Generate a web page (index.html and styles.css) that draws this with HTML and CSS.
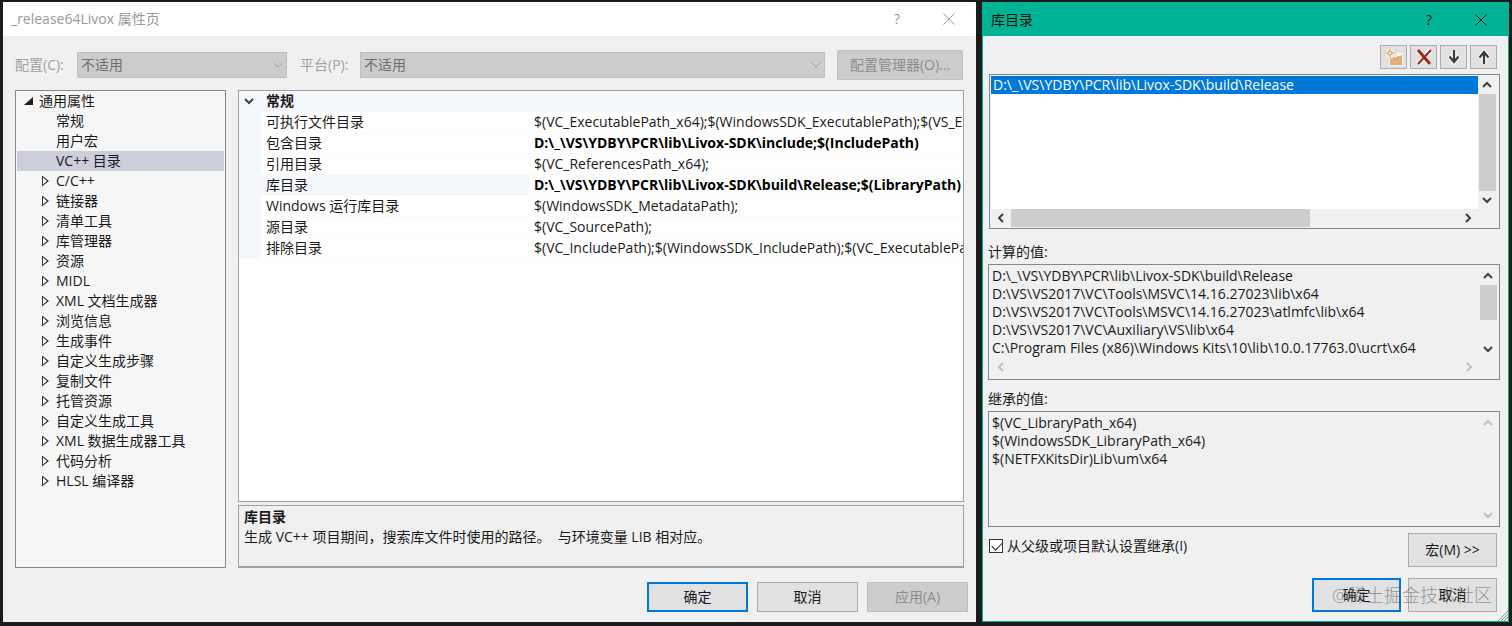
FILE: index.html
```html
<!DOCTYPE html>
<html lang="zh-CN">
<head>
    <meta charset="UTF-8">
    <meta name="viewport" content="width=device-width, initial-scale=1.0">
    <title>_release64Livox 属性页</title>
    <link rel="stylesheet" href="styles.css">
</head>
<body>

    <!-- Shared icons -->
    <svg class="sprite" aria-hidden="true">
        <symbol id="chevron-up" viewBox="0 0 10 10"><path d="M1 7l4-4 4 4" /></symbol>
        <symbol id="chevron-down" viewBox="0 0 10 10"><path d="M1 3l4 4 4-4" /></symbol>
        <symbol id="chevron-left" viewBox="0 0 10 10"><path d="M7 1L3 5l4 4" /></symbol>
        <symbol id="chevron-right" viewBox="0 0 10 10"><path d="M3 1l4 4-4 4" /></symbol>
        <symbol id="close" viewBox="0 0 12 12"><path d="M.5.5l11 11M11.5.5l-11 11" /></symbol>
    </svg>

    <!-- Property pages window -->
    <section class="window properties">
        <header class="titlebar">
            <h1>_release64Livox 属性页</h1>
            <button class="caption" aria-label="帮助">?</button>
            <button class="caption" aria-label="关闭"><svg class="icon-close"><use href="#close" /></svg></button>
        </header>

        <div class="config-row">
            <label for="config">配置(C):</label>
            <div class="dropdown dropdown-config">
                <select id="config" disabled><option>不适用</option></select>
                <svg class="chevron"><use href="#chevron-down" /></svg>
            </div>
            <label for="platform" class="platform-label">平台(P):</label>
            <div class="dropdown dropdown-platform">
                <select id="platform" disabled><option>不适用</option></select>
                <svg class="chevron"><use href="#chevron-down" /></svg>
            </div>
            <button class="btn config-manager" disabled>配置管理器(O)...</button>
        </div>

        <div class="panels">
            <nav class="tree">
                <ul>
                    <li class="root">
                        <svg class="arrow-open" viewBox="0 0 9 9"><path d="M9 0v8H0z" /></svg>通用属性
                    </li>
                    <li>常规</li>
                    <li>用户宏</li>
                    <li class="selected">VC++ 目录</li>
                    <li class="closed">C/C++</li>
                    <li class="closed">链接器</li>
                    <li class="closed">清单工具</li>
                    <li class="closed">库管理器</li>
                    <li class="closed">资源</li>
                    <li class="closed">MIDL</li>
                    <li class="closed">XML 文档生成器</li>
                    <li class="closed">浏览信息</li>
                    <li class="closed">生成事件</li>
                    <li class="closed">自定义生成步骤</li>
                    <li class="closed">复制文件</li>
                    <li class="closed">托管资源</li>
                    <li class="closed">自定义生成工具</li>
                    <li class="closed">XML 数据生成器工具</li>
                    <li class="closed">代码分析</li>
                    <li class="closed">HLSL 编译器</li>
                </ul>
            </nav>

            <div class="details">
                <div class="grid">
                    <table>
                        <colgroup>
                            <col class="col-gutter">
                            <col class="col-name">
                            <col>
                        </colgroup>
                        <tr class="group">
                            <td class="gutter"><svg class="chevron"><use href="#chevron-down" /></svg></td>
                            <th colspan="2">常规</th>
                        </tr>
                        <tr>
                            <td class="gutter"></td>
                            <td>可执行文件目录</td>
                            <td>$(VC_ExecutablePath_x64);$(WindowsSDK_ExecutablePath);$(VS_ExecutablePath)</td>
                        </tr>
                        <tr>
                            <td class="gutter"></td>
                            <td>包含目录</td>
                            <td class="changed">D:\_\VS\YDBY\PCR\lib\Livox-SDK\include;$(IncludePath)</td>
                        </tr>
                        <tr>
                            <td class="gutter"></td>
                            <td>引用目录</td>
                            <td>$(VC_ReferencesPath_x64);</td>
                        </tr>
                        <tr>
                            <td class="gutter"></td>
                            <td class="current">库目录</td>
                            <td class="changed">D:\_\VS\YDBY\PCR\lib\Livox-SDK\build\Release;$(LibraryPath)</td>
                        </tr>
                        <tr>
                            <td class="gutter"></td>
                            <td>Windows 运行库目录</td>
                            <td>$(WindowsSDK_MetadataPath);</td>
                        </tr>
                        <tr>
                            <td class="gutter"></td>
                            <td>源目录</td>
                            <td>$(VC_SourcePath);</td>
                        </tr>
                        <tr>
                            <td class="gutter"></td>
                            <td>排除目录</td>
                            <td>$(VC_IncludePath);$(WindowsSDK_IncludePath);$(VC_ExecutablePath_x64)</td>
                        </tr>
                    </table>
                </div>
                <div class="description">
                    <h2>库目录</h2>
                    <p>生成 VC++ 项目期间，搜索库文件时使用的路径。&nbsp; 与环境变量 LIB 相对应。</p>
                </div>
            </div>
        </div>

        <footer class="actions">
            <button class="btn primary">确定</button>
            <button class="btn">取消</button>
            <button class="btn" disabled>应用(A)</button>
        </footer>
    </section>

    <!-- Library directories window -->
    <section class="window directories">
        <header class="titlebar">
            <h1>库目录</h1>
            <button class="caption" aria-label="帮助">?</button>
            <button class="caption" aria-label="关闭"><svg class="icon-close"><use href="#close" /></svg></button>
        </header>

        <div class="toolbar">
            <button class="tool" aria-label="新行">
                <svg viewBox="0 0 20 20">
                    <path d="M5 9h7l1-3h6v13H5z" fill="#f6f3ee" />
                    <path d="M6 10h7l1-2h4v10H6z" fill="#e0b078" />
                    <path d="M14 8h3v1h-3z" fill="#fff" />
                    <circle cx="6" cy="6" r="5.5" fill="#f8f3ea" stroke="#cfc8bd" stroke-width=".6" />
                    <path d="M6 1.5v9M1.5 6h9" stroke="#cf8d3a" />
                    <path d="M3.5 3.5l5 5M8.500 3.500l-5 5" stroke="#cf8d3a" stroke-width=".7" />
                    <circle cx="6" cy="6" r="1.500" fill="#fff" stroke="#cf8d3a" stroke-width=".6" />
                </svg>
            </button>
            <button class="tool" aria-label="删除">
                <svg viewBox="0 0 20 20" fill="none">
                    <path d="M4 3l12 14M17 3L4 17" stroke="#f8f8f8" stroke-width="5" />
                    <path d="M4 3l12 14" stroke="#a82410" stroke-width="3" />
                    <path d="M17 3L4 17" stroke="#a82410" stroke-width="2" />
                </svg>
            </button>
            <button class="tool" aria-label="下移">
                <svg viewBox="0 0 20 20" fill="none">
                    <path d="M10 3v13M5 9l5 6 5-6" stroke="#f8f8f8" stroke-width="5" />
                    <path d="M10 3v12M5.500 9.500L10 15l4.500-5.500" stroke="#3c3c3c" stroke-width="2.200" />
                </svg>
            </button>
            <button class="tool" aria-label="上移">
                <svg viewBox="0 0 20 20" fill="none">
                    <path d="M10 17V4M5 11l5-6 5 6" stroke="#f8f8f8" stroke-width="5" />
                    <path d="M10 17V5M5.500 10.500L10 5l4.500 5.500" stroke="#3c3c3c" stroke-width="2.200" />
                </svg>
            </button>
        </div>

        <div class="box editable">
            <ul class="list" role="listbox" aria-label="库目录">
                <li role="option" aria-selected="true">D:\_\VS\YDBY\PCR\lib\Livox-SDK\build\Release</li>
            </ul>
            <div class="scroll-v">
                <svg class="chevron"><use href="#chevron-up" /></svg>
                <span class="thumb thumb-full"></span>
                <svg class="chevron"><use href="#chevron-down" /></svg>
            </div>
            <div class="scroll-h">
                <svg class="chevron"><use href="#chevron-left" /></svg>
                <span class="track"><span class="thumb"></span></span>
                <svg class="chevron"><use href="#chevron-right" /></svg>
            </div>
        </div>

        <label class="field-label" for="evaluated">计算的值:</label>
        <div class="box">
            <textarea id="evaluated" rows="5" wrap="off" readonly>D:\_\VS\YDBY\PCR\lib\Livox-SDK\build\Release
D:\VS\VS2017\VC\Tools\MSVC\14.16.27023\lib\x64
D:\VS\VS2017\VC\Tools\MSVC\14.16.27023\atlmfc\lib\x64
D:\VS\VS2017\VC\Auxiliary\VS\lib\x64
C:\Program Files (x86)\Windows Kits\10\lib\10.0.17763.0\ucrt\x64</textarea>
            <div class="scroll-v">
                <svg class="chevron"><use href="#chevron-up" /></svg>
                <span class="thumb thumb-short"></span>
                <svg class="chevron"><use href="#chevron-down" /></svg>
            </div>
            <div class="scroll-h inactive">
                <svg class="chevron"><use href="#chevron-left" /></svg>
                <svg class="chevron"><use href="#chevron-right" /></svg>
            </div>
        </div>

        <label class="field-label" for="inherited">继承的值:</label>
        <div class="box">
            <textarea id="inherited" rows="6" wrap="off" readonly>$(VC_LibraryPath_x64)
$(WindowsSDK_LibraryPath_x64)
$(NETFXKitsDir)Lib\um\x64</textarea>
            <div class="scroll-v inactive">
                <svg class="chevron"><use href="#chevron-up" /></svg>
                <svg class="chevron"><use href="#chevron-down" /></svg>
            </div>
        </div>

        <div class="inherit-row">
            <label class="check"><input type="checkbox" checked>从父级或项目默认设置继承(I)</label>
            <button class="btn">宏(M) &gt;&gt;</button>
        </div>

        <footer class="actions">
            <button class="btn primary">确定</button>
            <button class="btn">取消</button>
            <span class="watermark">@稀土掘金技术社区</span>
        </footer>
        <svg class="grip" viewBox="0 0 10 10"><path d="M0 10L10 0M3 10l7-7M6 10l4-4" /></svg>
    </section>

</body>
</html>
```

FILE: styles.css
```css
* {
    box-sizing: border-box;
}

body {
    display: grid;
    grid-template-columns: 973fr 527fr;
    gap: 6px;
    min-height: 100vh;
    margin: 0;
    padding: 2px 3px 4px;
    background-color: #1a1c1b;
    color: #1a1a1a;
    font-family: "Open Sans", "Noto Sans CJK SC", sans-serif;
    font-size: 14px;
    line-height: 20px;
}

h1, h2, p, ul {
    margin: 0;
    padding: 0;
    font-size: 14px;
    font-weight: normal;
    list-style: none;
}

button, select, textarea {
    font: inherit;
    color: inherit;
}

.sprite {
    position: absolute;
    width: 0;
    height: 0;
}

.window {
    display: flex;
    flex-direction: column;
    min-width: 0;
    background-color: #f0f0f0;
}

/* Title bars */
.titlebar {
    display: flex;
    align-items: center;
    height: 34px;
    padding: 0 1px 0 8px;
    background-color: #fff;
    color: #999;
}

.titlebar h1 {
    flex: 1;
}

.caption {
    display: flex;
    align-items: center;
    justify-content: center;
    width: 52px;
    height: 33px;
    padding: 0;
    border: none;
    background: none;
}

.icon-close {
    width: 12px;
    height: 12px;
    fill: none;
    stroke: currentColor;
}

.chevron {
    width: 10px;
    height: 10px;
    fill: none;
    stroke: #404040;
    stroke-width: 2;
}

/* Buttons */
.btn {
    width: 101px;
    height: 30px;
    padding: 0;
    border: 1px solid #adadad;
    background-color: #e1e1e1;
    white-space: nowrap;
}

.btn.primary {
    border: 2px solid #0078d7;
}

.btn:disabled {
    border-color: #bfbfbf;
    background-color: #ccc;
    color: #8d8d8d;
}

/* Configuration row */
.config-row {
    display: flex;
    align-items: center;
    height: 54px;
    padding: 4px 13px 0 12px;
    color: #a0a0a0;
}

.config-row label {
    width: 62px;
    white-space: nowrap;
}

.config-row .platform-label {
    width: 60px;
    margin-left: 13px;
}

.dropdown {
    position: relative;
    min-width: 0;
}

.dropdown-config {
    flex: 210;
}

.dropdown-platform {
    flex: 465;
}

.dropdown select {
    display: block;
    width: 100%;
    height: 26px;
    padding: 0 3px;
    border: 1px solid #bfbfbf;
    border-radius: 0;
    background-color: #ccc;
    color: #6d6d6d;
    opacity: 1;
    appearance: none;
}

.dropdown .chevron {
    position: absolute;
    top: 8px;
    right: 4px;
    stroke: #a0a0a0;
    stroke-width: 1;
}

.config-manager {
    width: 126px;
    margin-left: 12px;
}

/* Tree and property grid */
.panels {
    display: grid;
    grid-template-columns: 211fr 726fr;
    flex: 1;
    gap: 12px;
    padding: 0 12px;
}

.tree {
    padding: 0 1px;
    border: 1px solid #828790;
    background-color: #f6f6f6;
}

.tree li {
    display: flex;
    align-items: center;
    height: 20px;
    padding-left: 39px;
    white-space: nowrap;
}

.tree .root {
    gap: 6px;
    padding-left: 7px;
}

.tree .selected {
    background-color: #cccedb;
}

.tree .closed {
    padding-left: 25px;
}

.tree .closed::before {
    content: "";
    width: 7px;
    height: 11px;
    margin-right: 7px;
    background: #333;
    clip-path: polygon(0 0, 100% 50%, 0 100%, 0 0, 1px 2px, 1px 9px, 5px 50%, 1px 2px);
}

.arrow-open {
    width: 9px;
    height: 9px;
    fill: #1e1e1e;
}

.details {
    display: flex;
    flex-direction: column;
    gap: 3px;
    min-width: 0;
}

.grid {
    flex: 1;
    overflow: hidden;
    border: 1px solid #a0a0a0;
    background-color: #fff;
}

.grid table {
    width: 100%;
    border-spacing: 0;
    table-layout: fixed;
}

.col-gutter {
    width: 22px;
}

.col-name {
    width: 268px;
}

.grid td, .grid th {
    height: 21px;
    padding: 0 0 0 5px;
    overflow: hidden;
    border-bottom: 1px solid #fafafa;
    text-align: left;
    white-space: nowrap;
}

.grid .gutter {
    border-color: #f4f7fc;
}

.gutter, .group, .current {
    background-color: #f4f7fc;
}

.gutter .chevron {
    display: block;
}

.changed {
    color: #000;
    font-weight: bold;
}

.description {
    height: 63px;
    padding: 1px 5px;
    border: 1px solid #a0a0a0;
    border-bottom-width: 2px;
}

.description h2 {
    font-weight: bold;
}

.actions {
    position: relative;
    display: flex;
    justify-content: flex-end;
    gap: 9px;
    padding: 14px 8px 10px;
}

/* Library directories window */
.directories {
    position: relative;
    border: 1px solid #00b294;
}

.directories .titlebar {
    height: 33px;
    background-color: #00b294;
    color: #111;
}

.toolbar {
    display: flex;
    justify-content: flex-end;
    gap: 3px;
    padding: 9px 11px 5px;
}

.tool {
    width: 27px;
    height: 24px;
    padding: 1px 2px;
    border: 1px solid #adadad;
    background-color: #e1e1e1;
}

.tool svg {
    display: block;
    width: 20px;
    height: 20px;
    margin: auto;
}

.box {
    display: grid;
    grid-template-columns: 1fr 18px;
    height: 116px;
    margin: 0 8px 0 5px;
    padding: 2px;
    border: 1px solid #828790;
}

.editable {
    grid-template-rows: 1fr 18px;
    height: 155px;
    margin-bottom: 4px;
    margin-left: 6px;
    padding: 1px 3px 1px 1px;
}

.list {
    background-color: #fff;
}

.list li {
    height: 18px;
    padding-left: 2px;
    background-color: #0078d7;
    color: #fff;
    line-height: 18px;
}

.box textarea {
    display: block;
    width: 100%;
    padding: 0 1px;
    border: none;
    outline: none;
    overflow: hidden;
    background: none;
    line-height: 18px;
    resize: none;
}

.scroll-v, .scroll-h {
    display: flex;
    align-items: center;
    justify-content: space-between;
}

.scroll-v {
    flex-direction: column;
    padding: 4px 0;
}

.scroll-h {
    height: 18px;
    padding: 0 5px;
}

.thumb {
    background-color: #cdcdcd;
}

.thumb-full {
    flex: 1;
    width: 17px;
    margin: 4px 0;
}

.thumb-short {
    width: 17px;
    height: 35px;
    margin: 4px 0 auto;
}

.track {
    display: flex;
    flex: 1;
    height: 18px;
    margin: 0 5px;
}

.track .thumb {
    width: 67%;
}

.inactive .chevron {
    stroke: #bfbfbf;
}

.field-label {
    margin: 9px 5px 2px;
}

.inherit-row {
    display: flex;
    justify-content: space-between;
    padding: 6px 11px 0 6px;
}

.directories .btn {
    width: 89px;
    height: 34px;
}

.check {
    display: flex;
    align-items: center;
    gap: 4px;
    height: 26px;
}

.check input {
    position: relative;
    width: 14px;
    height: 14px;
    margin: 0;
    border: 1px solid #333;
    background-color: #fff;
    appearance: none;
}

.check input:checked::after {
    content: "";
    position: absolute;
    top: 2px;
    left: 2px;
    width: 9px;
    height: 5px;
    border: solid #222;
    border-width: 0 0 1px 1px;
    transform: rotate(-45deg);
}

.directories .actions {
    gap: 7px;
    padding: 11px 11px 9px;
}

.watermark {
    position: absolute;
    top: 18px;
    right: 16px;
    color: rgba(90, 90, 90, 0.6);
    font-size: 18px;
    font-weight: 300;
}

.grip {
    position: absolute;
    right: 0;
    bottom: 0;
    width: 10px;
    height: 10px;
    stroke: #7f9f98;
}
```
